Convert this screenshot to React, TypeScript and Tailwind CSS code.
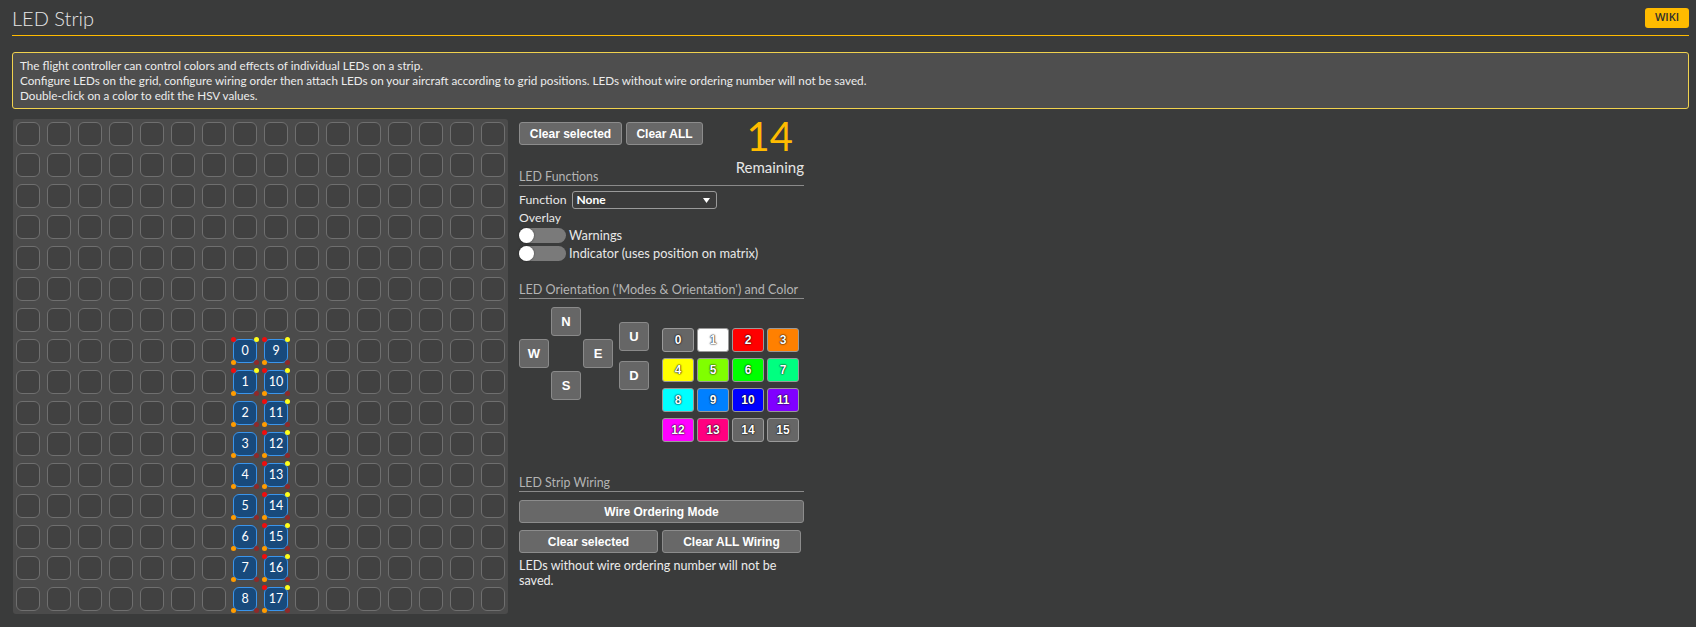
import React from "react";

const BTN =
  "rounded-[3px] border border-[#8c8c8c] bg-[#686868] font-['Liberation_Sans',Arial,sans-serif] text-[12px] font-bold text-white leading-none";

const colorSwatches: { n: number; bg: string }[] = [
  { n: 0, bg: "bg-[#666666]" },
  { n: 1, bg: "bg-[#ffffff]" },
  { n: 2, bg: "bg-[#ff0000]" },
  { n: 3, bg: "bg-[#ff8000]" },
  { n: 4, bg: "bg-[#ffff00]" },
  { n: 5, bg: "bg-[#80ff00]" },
  { n: 6, bg: "bg-[#00ff00]" },
  { n: 7, bg: "bg-[#00ff80]" },
  { n: 8, bg: "bg-[#00ffff]" },
  { n: 9, bg: "bg-[#0080ff]" },
  { n: 10, bg: "bg-[#0000ff]" },
  { n: 11, bg: "bg-[#8000ff]" },
  { n: 12, bg: "bg-[#ff00ff]" },
  { n: 13, bg: "bg-[#ff0080]" },
  { n: 14, bg: "bg-[#666666]" },
  { n: 15, bg: "bg-[#666666]" },
];

function Cell({ row, col }: { row: number; col: number }) {
  const active = (col === 7 || col === 8) && row >= 7 && row <= 15;
  if (!active) {
    return (
      <div className="h-[24px] w-[24px] rounded-[6px] border border-[#6f6f6f] bg-[#414141]" />
    );
  }
  const num = col === 7 ? row - 7 : row - 7 + 9;
  const topDots = col === 8 || row <= 8;
  return (
    <div className="relative flex h-[24px] w-[24px] items-center justify-center rounded-[6px] border border-[#3a95ec] bg-[#184a7c] text-[12.5px] leading-none text-white">
      {num}
      {topDots && (
        <>
          <span className="absolute -left-[3px] -top-[3px] h-[5px] w-[5px] rounded-full bg-[#f00d0d]" />
          <span className="absolute -right-[3px] -top-[3px] h-[5px] w-[5px] rounded-full bg-[#ffff1a]" />
        </>
      )}
      <span className="absolute -bottom-[3px] -left-[3px] h-[5px] w-[5px] rounded-full bg-[#ff9c00]" />
      <span className="absolute -bottom-[3px] -right-[3px] h-[5px] w-[5px] rounded-full bg-[#8e2a2a]" />
    </div>
  );
}

function Toggle({ label }: { label: string }) {
  return (
    <div className="flex h-[15px] items-center gap-[3px]">
      <div className="relative h-[15px] w-[47px] rounded-full bg-[#7a7a7a]">
        <div className="absolute left-0 top-0 h-[15px] w-[15px] rounded-full bg-white shadow-[0_0_2px_rgba(0,0,0,0.5)]" />
      </div>
      <span className="whitespace-nowrap text-[12.8px] leading-[15px]">{label}</span>
    </div>
  );
}

function DirBtn({ label, cls = "" }: { label: string; cls?: string }) {
  return (
    <div
      className={`flex h-[29px] w-[30px] items-center justify-center rounded-[3px] border border-[#8a8a8a] bg-[#666666] font-['Liberation_Sans',Arial,sans-serif] text-[13px] font-bold text-white ${cls}`}
    >
      {label}
    </div>
  );
}

export default function App() {
  const rows = Array.from({ length: 16 }, (_, r) => r);
  const cols = Array.from({ length: 16 }, (_, c) => c);
  return (
    <div className="min-h-screen w-full bg-[#3a3b3b] pl-[12px] pr-[7px] font-['Lato',sans-serif] text-[#e8e8e8]">
      <div className="flex h-[36px] items-center justify-between border-b border-[#ffbb00]">
        <h1 className="text-[20px] font-light leading-none text-[#e6e6e6]">LED Strip</h1>
        <div className="flex h-[20px] w-[44px] items-center justify-center rounded-[3px] bg-[#ffbb00] font-['Open_Sans',sans-serif] text-[11px] font-semibold text-[#2e2e2e]">
          WIKI
        </div>
      </div>

      <div className="mt-[16px] rounded-[3px] border border-[#f0d24e] bg-[#4e4e4e] px-[7px] py-[5px] text-[11.7px] leading-[15px] text-[#ececec]">
        <div>The flight controller can control colors and effects of individual LEDs on a strip.</div>
        <div>
          Configure LEDs on the grid, configure wiring order then attach LEDs on your aircraft according to grid
          positions. LEDs without wire ordering number will not be saved.
        </div>
        <div>Double-click on a color to edit the HSV values.</div>
      </div>

      <div className="mt-[10px] flex items-start gap-[11px]">
        <div className="ml-[1px] grid grid-cols-[repeat(16,24px)] gap-[7px] rounded-[3px] bg-[#4b4b4b] p-[3px]">
          {rows.map((r) => cols.map((c) => <Cell key={`${r}-${c}`} row={r} col={c} />))}
        </div>

        <div className="w-[285px]">
          <div className="flex items-start justify-between border-b border-[#8a8a8a]">
            <div className="pt-[3px]">
              <div className="flex gap-[4px]">
                <button className={`${BTN} h-[23px] w-[103px]`}>Clear selected</button>
                <button className={`${BTN} h-[23px] w-[77px]`}>Clear ALL</button>
              </div>
              <div className="mt-[24px] whitespace-nowrap text-[12.4px] leading-[16px] text-[#b4b4b4]">
                LED Functions
              </div>
            </div>
            <div className="flex flex-col items-center">
              <div className="text-[40px] font-normal leading-[34px] text-[#ffbb00]">14</div>
              <div className="mt-[6px] text-[15px] leading-[16px] text-[#e6e6e6]">Remaining</div>
            </div>
          </div>

          <div className="mt-[5px] flex h-[18px] items-center">
            <span className="text-[12.3px] leading-none">Function</span>
            <div className="ml-[5px] flex h-[18px] w-[145px] items-center justify-between rounded-[3px] border border-[#9a9a9a] bg-[#3b3b3b] pl-[4px] pr-[6px]">
              <span className="text-[12px] font-bold leading-none text-white">None</span>
              <svg width="7" height="5" viewBox="0 0 7 5">
                <path d="M0 0 L7 0 L3.5 5 Z" fill="#ffffff" />
              </svg>
            </div>
          </div>
          <div className="mt-[1px] text-[12.3px] leading-[16px]">Overlay</div>
          <div className="mt-[2px]">
            <Toggle label="Warnings" />
          </div>
          <div className="mt-[3px]">
            <Toggle label="Indicator (uses position on matrix)" />
          </div>

          <div className="mt-[21px] whitespace-nowrap border-b border-[#8a8a8a] text-[12.6px] leading-[16px] text-[#b4b4b4]">
            LED Orientation ('Modes &amp; Orientation') and Color
          </div>

          <div className="flex items-start">
            <div className="mt-[8px] grid grid-cols-[repeat(3,30px)] grid-rows-[repeat(3,29px)] gap-x-[2px] gap-y-[3px]">
              <DirBtn label="N" cls="col-start-2 row-start-1" />
              <DirBtn label="W" cls="col-start-1 row-start-2" />
              <DirBtn label="E" cls="col-start-3 row-start-2" />
              <DirBtn label="S" cls="col-start-2 row-start-3" />
            </div>
            <div className="ml-[6px] mt-[23px] flex flex-col gap-[10px]">
              <DirBtn label="U" />
              <DirBtn label="D" />
            </div>
            <div className="ml-[13px] mt-[29px] grid grid-cols-[repeat(4,32px)] gap-x-[3px] gap-y-[6px]">
              {colorSwatches.map((s) => (
                <div
                  key={s.n}
                  className={`flex h-[24px] items-center justify-center rounded-[3px] border border-[#9a9a9a] ${s.bg} font-['Liberation_Sans',Arial,sans-serif] text-[12px] font-bold text-white [text-shadow:0_0_2px_#000,0_0_1px_#000]`}
                >
                  {s.n}
                </div>
              ))}
            </div>
          </div>

          <div className="mt-[33px] whitespace-nowrap border-b border-[#8a8a8a] text-[12.4px] leading-[16px] text-[#b4b4b4]">
            LED Strip Wiring
          </div>
          <button className={`${BTN} mt-[8px] h-[23px] w-full`}>Wire Ordering Mode</button>
          <div className="mt-[7px] flex gap-[4px]">
            <button className={`${BTN} h-[23px] w-[139px]`}>Clear selected</button>
            <button className={`${BTN} h-[23px] w-[139px]`}>Clear ALL Wiring</button>
          </div>
          <div className="mt-[5px] whitespace-nowrap text-[12.6px] leading-[15px] text-[#ececec]">
            LEDs without wire ordering number will not be
            <br />
            saved.
          </div>
        </div>
      </div>
    </div>
  );
}
